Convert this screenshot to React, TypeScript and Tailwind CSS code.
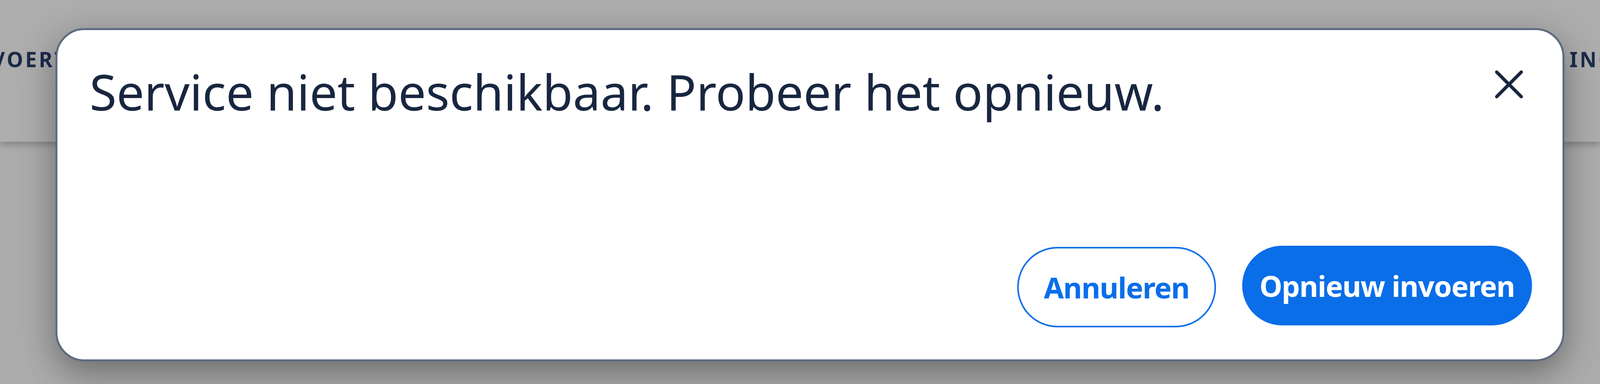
import { X } from "lucide-react";

export default function App() {
  return (
    <main className="relative h-[983px] w-full overflow-hidden bg-[#acacac] font-['Noto_Sans',sans-serif]">
      {/* page under the overlay */}
      <header className="flex h-[363px] items-start justify-between overflow-hidden bg-[#adadad] pt-[125px] shadow-[0_6px_18px_rgba(0,0,0,0.28)]">
        <span className="ml-[-22px] text-[53px] leading-[53px] font-bold tracking-[0.1em] text-[#1c2b4b]">
          VOERT
        </span>
        <span className="mr-[-40px] text-[53px] leading-[53px] font-bold tracking-[0.1em] text-[#1c2b4b]">
          ING
        </span>
      </header>

      {/* dialog */}
      <div
        role="dialog"
        className="
          absolute
          left-[3.47%]
          right-[2.22%]
          top-[72px]
          bottom-[58px]
          flex
          flex-col
          justify-between
          rounded-[74px]
          border-[5px]
          border-[#5d6b80]
          bg-white
          pt-[76px]
          pr-[74px]
          pb-[82px]
          pl-[82px]
          shadow-[0_30px_90px_rgba(0,0,0,0.38)]
        "
      >
        <div className="flex items-start justify-between gap-10">
          <h1 className="mt-[6px] text-[126px] leading-[150px] font-normal text-[#182640]">
            Service niet beschikbaar. Probeer het opnieuw.
          </h1>

          <button className="shrink-0 text-[#182640]" aria-label="Sluiten">
            <X size={126} strokeWidth={1.6} />
          </button>
        </div>

        <div className="flex items-center justify-end gap-[1.8%] pr-[4px]">
          <button
            className="
              mt-[8px]
              flex
              h-[206px]
              w-[13.8%]
              items-center
              justify-center
              rounded-full
              border-[4px]
              border-[#0a6ee9]
              bg-white
              text-[74px]
              font-bold
              tracking-[-0.02em]
              text-[#0a6ee9]
            "
          >
            Annuleren
          </button>

          <button
            className="
              flex
              h-[204px]
              w-[20.1%]
              items-center
              justify-center
              whitespace-nowrap
              rounded-full
              bg-[#0a6ee9]
              text-[74px]
              font-bold
              tracking-[-0.02em]
              text-white
            "
          >
            Opnieuw invoeren
          </button>
        </div>
      </div>
    </main>
  );
}
